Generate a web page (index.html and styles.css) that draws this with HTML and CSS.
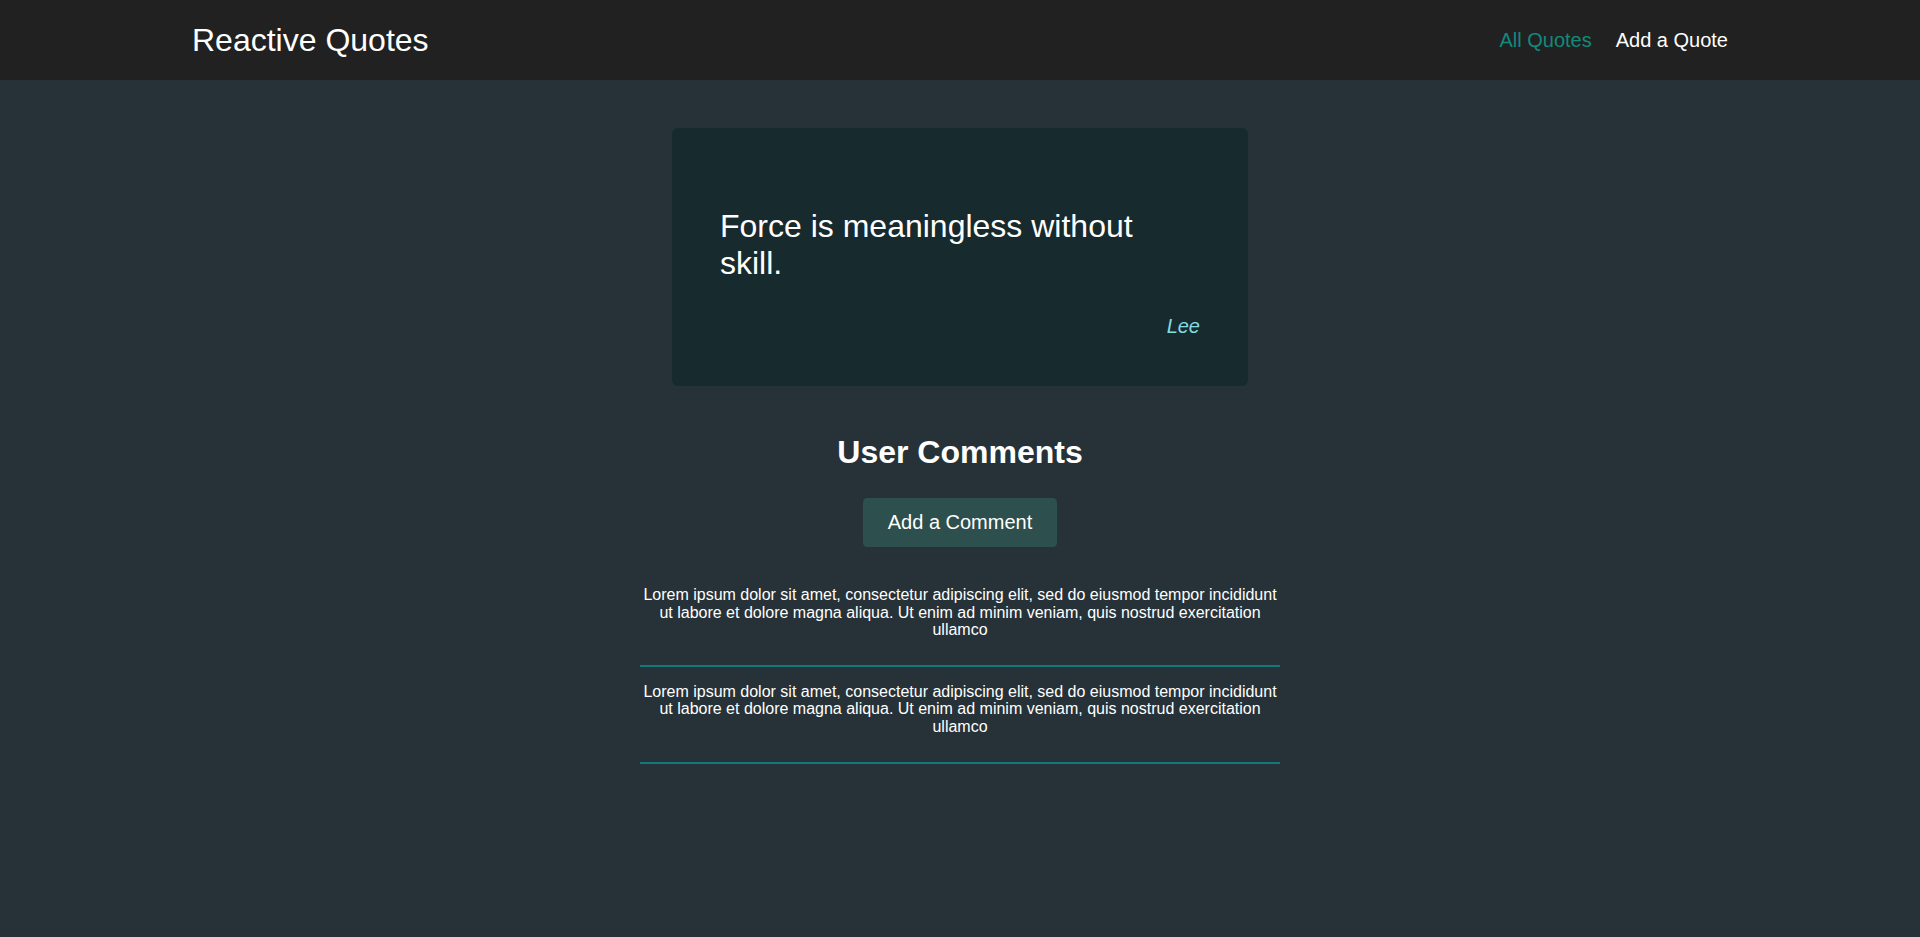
FILE: index.html
```html
<!DOCTYPE html>
<html lang="en">
<head>
<meta charset="utf-8">
<title>Reactive Quotes</title>
<link rel="stylesheet" href="styles.css">
</head>
<body>
<header class="header">
  <div class="logo">Reactive Quotes</div>
  <nav class="nav">
    <ul class="nav-list">
      <li><a class="nav-link active" href="#">All Quotes</a></li>
      <li><a class="nav-link" href="#">Add a Quote</a></li>
    </ul>
  </nav>
</header>
<main class="main">
  <figure class="quote">
    <p class="quote-text">Force is meaningless without skill.</p>
    <figcaption class="quote-author">Lee</figcaption>
  </figure>
  <section class="comments">
    <h2 class="comments-title">User Comments</h2>
    <button class="btn" type="button">Add a Comment</button>
    <ul class="comment-list">
      <li class="comment"><p>Lorem ipsum dolor sit amet, consectetur adipiscing elit, sed do eiusmod tempor incididunt ut labore et dolore magna aliqua. Ut enim ad minim veniam, quis nostrud exercitation ullamco</p></li>
      <li class="comment"><p>Lorem ipsum dolor sit amet, consectetur adipiscing elit, sed do eiusmod tempor incididunt ut labore et dolore magna aliqua. Ut enim ad minim veniam, quis nostrud exercitation ullamco</p></li>
    </ul>
  </section>
</main>
</body>
</html>
```

FILE: styles.css
```css
* { box-sizing: border-box; }

html, body {
  margin: 0;
  padding: 0;
}

body {
  font-family: "Liberation Sans", Arial, sans-serif;
  background: #263238;
  color: #ffffff;
  min-height: 100vh;
}

.header {
  height: 80px;
  background: #212121;
  padding: 0 10%;
  display: flex;
  align-items: center;
  justify-content: space-between;
}

.logo {
  font-size: 32px;
  color: #ffffff;
}

.nav-list {
  list-style: none;
  margin: 0;
  padding: 0;
  display: flex;
  gap: 24px;
}

.nav-link {
  font-size: 20px;
  color: #ffffff;
  text-decoration: none;
}

.nav-link.active {
  color: #12897e;
}

.main {
  display: block;
}

.quote {
  width: 576px;
  margin: 48px auto;
  padding: 48px;
  background: #172a2e;
  border-radius: 6px;
}

.quote-text {
  font-size: 32px;
  margin: 32px 0 33px;
  color: #ffffff;
}

.quote-author {
  font-size: 20px;
  font-style: italic;
  text-align: right;
  color: #84dbe2;
}

.comments {
  display: flex;
  flex-direction: column;
  align-items: center;
}

.comments-title {
  font-size: 32px;
  font-weight: bold;
  margin: 0 0 27px;
}

.btn {
  font-family: inherit;
  font-size: 20px;
  color: #ffffff;
  background: #2d4f4e;
  border: 1px solid #2d4f4e;
  border-radius: 4px;
  padding: 12px 24px;
  cursor: pointer;
}

.comment-list {
  list-style: none;
  margin: 23px 0 0;
  padding: 0;
  width: 640px;
}

.comment {
  padding: 16px 0 26px;
  border-bottom: 2px solid #0f7a7a;
  text-align: center;
}

.comment p {
  margin: 0;
  font-size: 16px;
  line-height: 1.1;
}
```
